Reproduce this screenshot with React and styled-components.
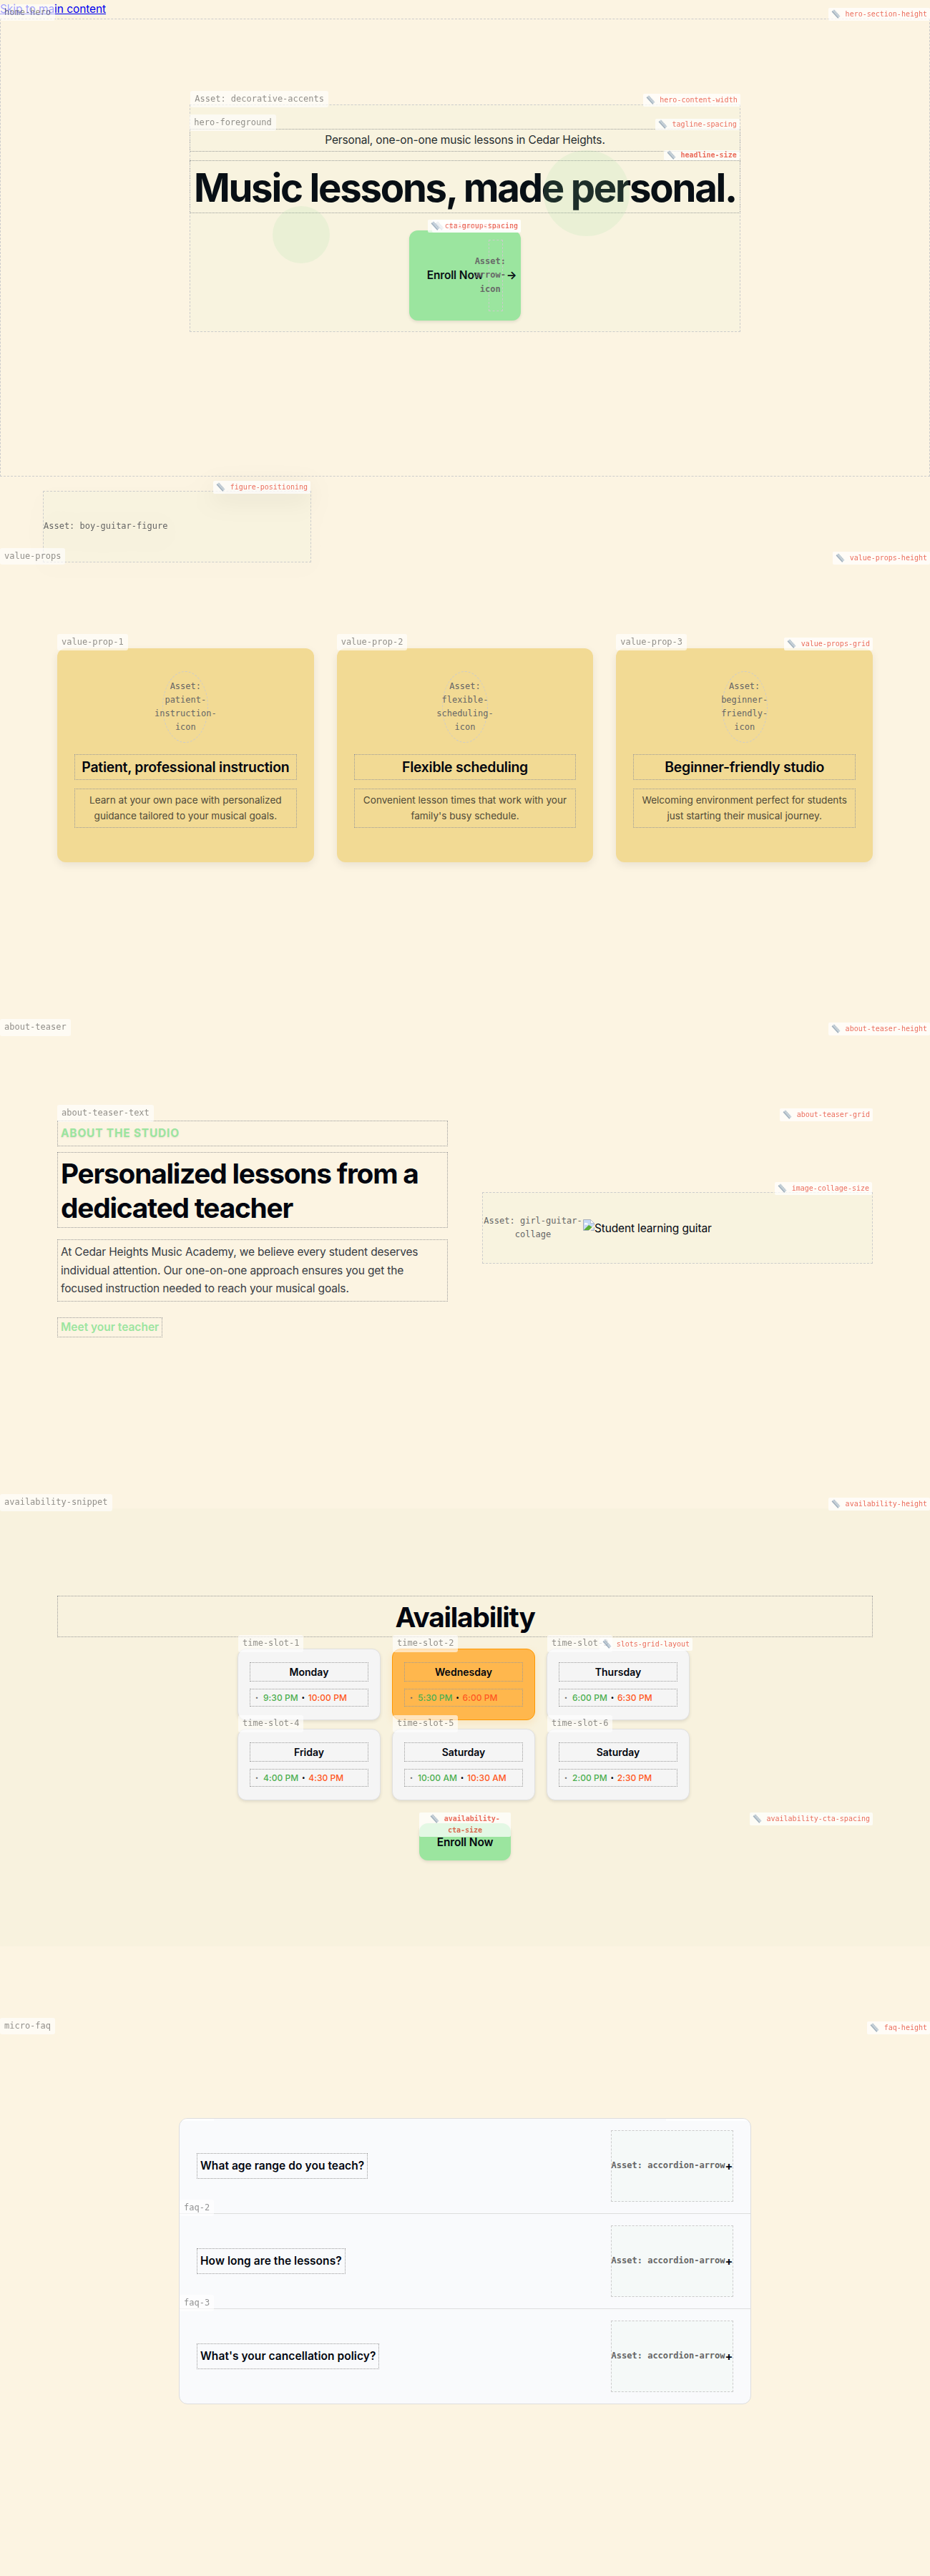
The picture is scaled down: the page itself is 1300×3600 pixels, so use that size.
import React from "react";
import styled, { createGlobalStyle, css } from "styled-components";

const sans = `Inter, "Liberation Sans", sans-serif`;
const mono = `"DejaVu Sans Mono", "Liberation Mono", monospace`;

const Global = createGlobalStyle`
  *, *::before, *::after { box-sizing: border-box; }
  body {
    margin: 0;
    background: #fcf4e2;
    color: #02060f;
    font-family: ${sans};
    font-size: 15.5px;
    line-height: 25.6px;
    letter-spacing: -0.15px;
  }
  h1, h2, h3, p { margin: 0; }
`;

const Page = styled.div`
  display: flow-root;
  height: 3600px;
  overflow: hidden;
`;

const SkipBar = styled.div`
  height: 25.6px;
`;

const SkipLink = styled.a`
  color: #0000ee;
  letter-spacing: -0.08px;
`;

const Label = styled.span`
  position: absolute;
  top: -20px;
  left: 0;
  z-index: 3;
  height: 23.2px;
  padding: 2px 6px;
  border-radius: 3px;
  background: rgba(255, 255, 255, 0.9);
  color: #666;
  opacity: 0.7;
  font: 400 12px/19.2px ${mono};
  letter-spacing: 0;
  white-space: nowrap;
`;

const NoteBox = styled.span`
  position: absolute;
  top: -15px;
  right: 0;
  z-index: 4;
  padding: 1px 4px;
  border-radius: 2px;
  background: rgba(255, 255, 255, 0.9);
  color: #e74c3c;
  opacity: 0.8;
  font-family: ${mono};
  font-size: 10px;
  font-weight: ${(p) => (p.$bold ? 700 : 400)};
  line-height: ${(p) => p.$line || 1.6};
  letter-spacing: 0;
  text-align: center;
  white-space: ${(p) => (p.$wrap ? "normal" : "nowrap")};
`;

const RulerSvg = styled.svg`
  width: 13px;
  height: 13px;
  margin: -2px 0.5px -2px 0;
  vertical-align: -1px;
`;

const Ruler = () => (
  <RulerSvg viewBox="0 0 13 13">
    <path d="M.6 3.200 4 .3 12.600 9.700 9.200 12.700Z" fill="#bccbd9" />
    <path d="M.6 3.200 1.700 2.300 10.300 11.700 9.200 12.700Z" fill="#8da1b5" />
    <path d="M5.200 1.700 3.900 2.800M6.900 3.500 5.600 4.600M8.600 5.400 7.300 6.500M10.300 7.200 9 8.300" stroke="#8496a8" strokeWidth=".6" />
  </RulerSvg>
);

const Note = ({ children, ...rest }) => (
  <NoteBox {...rest}>
    <Ruler /> {children}
  </NoteBox>
);

const dotted = css`
  border: 1px dotted #999;
  padding: 4px;
`;

const Asset = styled.div`
  position: relative;
  display: flex;
  align-items: center;
  justify-content: ${(p) => (p.$start ? "flex-start" : "center")};
  flex: none;
  width: ${(p) => p.$w || "auto"};
  height: 100px;
  border: 1px dashed #ccc;
  border-radius: ${(p) => (p.$round ? "50%" : "0")};
  background: ${(p) => (p.$plain ? "transparent" : "rgba(155, 229, 160, 0.045)")};
`;

const AssetText = styled.span`
  flex: none;
  width: ${(p) => p.$w || "auto"};
  color: #666;
  font-family: ${mono};
  font-size: 12px;
  line-height: 19.2px;
  letter-spacing: 0;
  text-align: center;
  white-space: normal;
`;

/* Hero */

const Hero = styled.section`
  position: relative;
  height: 640px;
  padding-top: 120px;
  outline: 1px dashed #ccc;
  outline-offset: -1px;
`;

const HeroContent = styled.div`
  position: relative;
  width: 769.4px;
  height: 318.4px;
  margin: 0 auto;
  padding-top: 34px;
`;

const Accents = styled.div`
  position: absolute;
  inset: 0;
  border: 1px dashed #ccc;
  background: rgba(155, 229, 160, 0.045);
`;

const Circle = styled.i`
  position: absolute;
  width: 80px;
  height: 80px;
  border-radius: 50%;
  background: rgba(155, 229, 160, 0.15);
`;

const SmallCircle = styled(Circle)`
  left: 15%;
  bottom: 30%;
`;

const LargeCircle = styled(Circle)`
  top: 20%;
  right: 20%;
  width: 120px;
  height: 120px;
`;

const Foreground = styled.div`
  position: relative;
  display: flex;
  flex-direction: column;
  text-align: center;
`;

const Tagline = styled.p`
  ${dotted}
  position: relative;
  color: #1d252b;
  line-height: 22.4px;
`;

const Headline = styled.h1`
  ${dotted}
  position: relative;
  margin-top: 12px;
  padding: 5px 4px 3px;
  font-size: 54.5px;
  font-weight: 700;
  line-height: 64px;
  letter-spacing: -2.24px;
  white-space: nowrap;
`;

const CtaGroup = styled.div`
  position: relative;
  align-self: center;
  margin-top: 24px;
`;

const Button = styled.div`
  position: relative;
  display: flex;
  align-items: center;
  justify-content: center;
  gap: 8px;
  width: ${(p) => p.$w}px;
  height: ${(p) => p.$h}px;
  padding: 0 24px;
  border-radius: 12px;
  background: #9be59f;
  box-shadow: 0 2px 4px rgba(0, 0, 0, 0.1);
  font-weight: 600;
  white-space: nowrap;
`;

const Arrow = styled.span`
  flex: none;
  width: 16px;
  font-weight: 700;
  text-align: center;
`;

/* Figure */

const Figure = styled.div`
  width: 375px;
  margin: 20.4px 0 0 60px;
  filter: drop-shadow(0 8px 16px rgba(0, 0, 0, 0.1));
`;

/* Shared section */

const Section = styled.section`
  position: relative;
  padding: 120px 80px;
  height: ${(p) => p.$h}px;
  margin-top: ${(p) => p.$gap || 0}px;
  background: ${(p) => (p.$tint ? "#f8f2de" : "transparent")};
`;

const Cards = styled.div`
  position: relative;
  display: grid;
  grid-template-columns: repeat(3, minmax(0, 1fr));
  gap: 32px;
`;

const Card = styled.article`
  position: relative;
  display: flex;
  flex-direction: column;
  align-items: center;
  height: 298.8px;
  padding: 32px 24px;
  border-radius: 12px;
  background: #f2da94;
  box-shadow: 0 4px 12px rgba(0, 0, 0, 0.08);
  text-align: center;
`;

const CardTitle = styled.h3`
  ${dotted}
  width: 100%;
  margin: 16px 0 12px;
  font-size: 19.4px;
  font-weight: 600;
  line-height: 26px;
  letter-spacing: -0.24px;
  white-space: nowrap;
`;

const CardText = styled.p`
  ${dotted}
  width: 100%;
  color: #504a38;
  font-size: 13.6px;
  line-height: 22.4px;
  letter-spacing: 0;
`;

/* About */

const AboutGrid = styled.div`
  position: relative;
  display: grid;
  grid-template-columns: repeat(2, minmax(0, 1fr));
  align-items: center;
  gap: 48px;
  height: 304px;
`;

const AboutText = styled.div`
  position: relative;
  height: 304px;
  padding-top: 2px;
`;

const Eyebrow = styled.p`
  ${dotted}
  color: #9be59f;
  font-weight: 700;
  letter-spacing: 0.05em;
  text-shadow: 0 1px 2px rgba(0, 0, 0, 0.1);
`;

const Title = styled.h2`
  ${dotted}
  margin-top: ${(p) => p.$top}px;
  padding: 5px 4px 3px;
  font-size: 38.8px;
  font-weight: 700;
  line-height: 48px;
  letter-spacing: -1.21px;
  text-align: ${(p) => p.$align || "left"};
`;

const AboutBody = styled.p`
  ${dotted}
  margin-top: 16px;
  color: #373b43;
`;

const TeacherLink = styled.a`
  ${dotted}
  display: inline-block;
  margin-top: 22px;
  color: #9be59f;
  font-weight: 600;
  line-height: 18px;
  letter-spacing: 0;
`;

const Broken = styled.svg`
  flex: none;
  width: 16px;
  height: 16px;
  margin-top: -8px;
`;

const BrokenImage = () => (
  <Broken viewBox="0 0 16 16">
    <path d="M.5.5h10l5 5v10H.5z" fill="#c6d9f7" stroke="#a9b0ba" />
    <path d="M2 7c0-2 2-3 3-1.500 2-.5 2.500 1.500 1.500 2H2z" fill="#fff" />
    <path d="M1 15 8 8l5 3-3 4z" fill="#5bae35" />
    <path d="M10.500.5v5h5z" fill="#fff" stroke="#a9b0ba" strokeWidth=".7" />
    <path d="M7.500 16 16 7.500v3L10.500 16z" fill="#f8f2de" />
  </Broken>
);

/* Availability */

const Slots = styled.div`
  position: relative;
  display: grid;
  grid-template-columns: repeat(3, 200px);
  gap: 12px 16px;
  width: 636px;
  margin: 16px auto 0;
`;

const Slot = styled.div`
  position: relative;
  display: flex;
  flex-direction: column;
  gap: 10px;
  height: 100px;
  padding: 18px 16px;
  border: 1px solid ${(p) => (p.$hot ? "#ff9800" : "#e0e0e0")};
  border-radius: 12px;
  background: ${(p) => (p.$hot ? "#ffb74d" : "#f5f5f5")};
  box-shadow: ${(p) => (p.$hot ? "0 4px 12px rgba(255, 152, 0, 0.15)" : "0 2px 4px rgba(0, 0, 0, 0.1)")};
  letter-spacing: 0;
`;

const Day = styled.h3`
  ${dotted}
  font-size: 14px;
  font-weight: 600;
  line-height: 17px;
  text-align: center;
`;

const Times = styled.div`
  ${dotted}
  display: flex;
  align-items: center;
  gap: 3px;
  font-size: 12px;
  font-weight: 500;
  line-height: 15px;
  letter-spacing: 0.06px;
  white-space: nowrap;
`;

const Lead = styled.span`
  width: 11px;
  padding-left: 3px;
  color: #666;
  font-size: 7.5px;
`;

const Start = styled.span`
  color: #4caf50;
`;

const End = styled.span`
  color: #ff5722;
`;

const Dot = styled.span`
  width: 8px;
  font-size: 8.5px;
  text-align: center;
`;

const CtaRow = styled.div`
  position: relative;
  display: flex;
  justify-content: center;
  margin-top: 32px;
`;

/* FAQ */

const FaqList = styled.div`
  width: 800px;
  height: 400px;
  margin: 0 auto;
  overflow: hidden;
  border: 1px solid #ddd;
  border-radius: 12px;
  background: #f9fafc;
`;

const FaqItem = styled.div`
  position: relative;
  display: flex;
  align-items: center;
  justify-content: space-between;
  height: 133px;
  padding: 0 24px;
  border-bottom: 1px solid #ddd;
  font-weight: 600;
  letter-spacing: 0.06px;

  &:last-child {
    height: 132px;
    border-bottom: 0;
  }
`;

const Question = styled.div`
  ${dotted}
`;

const Plus = styled.span`
  padding-top: 2px;
  font-size: 16px;
  font-weight: 700;
  letter-spacing: 0;
`;

const Strip = styled.i`
  position: absolute;
  top: 0;
  ${(p) => p.$side}: 0;
  width: ${(p) => p.$w}px;
  height: 3px;
  background: rgba(255, 255, 255, 0.8);
`;

const cards = [
  ["Asset: patient-instruction-icon", "Patient, professional instruction", "Learn at your own pace with personalized guidance tailored to your musical goals."],
  ["Asset: flexible-scheduling-icon", "Flexible scheduling", "Convenient lesson times that work with your family's busy schedule."],
  ["Asset: beginner-friendly-icon", "Beginner-friendly studio", "Welcoming environment perfect for students just starting their musical journey."],
];

const slots = [
  ["Monday", "9:30 PM", "10:00 PM"],
  ["Wednesday", "5:30 PM", "6:00 PM"],
  ["Thursday", "6:00 PM", "6:30 PM"],
  ["Friday", "4:00 PM", "4:30 PM"],
  ["Saturday", "10:00 AM", "10:30 AM"],
  ["Saturday", "2:00 PM", "2:30 PM"],
];

const questions = [
  "What age range do you teach?",
  "How long are the lessons?",
  "What's your cancellation policy?",
];

export default function App() {
  return (
    <Page>
      <Global />
      <SkipBar>
        <SkipLink href="#main">Skip to main content</SkipLink>
      </SkipBar>

      <Hero id="main">
        <Label>home-hero</Label>
        <Note>hero-section-height</Note>
        <HeroContent>
          <Foreground>
            <Label>hero-foreground</Label>
            <Tagline>
              Personal, one-on-one music lessons in Cedar Heights.
              <Note $line={1.4}>tagline-spacing</Note>
            </Tagline>
            <Headline>
              Music lessons, made personal.
              <Note $bold $line={1.15}>headline-size</Note>
            </Headline>
            <CtaGroup>
              <Button $w={156} $h={126}>
                Enroll Now
                <Asset $w="20px" $plain>
                  <AssetText $w="43.400px">Asset: arrow-icon</AssetText>
                  <Arrow>→</Arrow>
                </Asset>
                <Note $bold>primary-cta-size</Note>
              </Button>
              <Note>cta-group-spacing</Note>
            </CtaGroup>
          </Foreground>
          <Accents>
            <Label>Asset: decorative-accents</Label>
            <SmallCircle />
            <LargeCircle />
          </Accents>
          <Note>hero-content-width</Note>
        </HeroContent>
      </Hero>

      <Figure>
        <Asset $start>
          <AssetText>Asset: boy-guitar-figure</AssetText>
          <Note>figure-positioning</Note>
        </Asset>
      </Figure>

      <Section $h={658.4}>
        <Label>value-props</Label>
        <Note>value-props-height</Note>
        <Cards>
          {cards.map(([asset, title, text], i) => (
            <Card key={title}>
              <Label>value-prop-{i + 1}</Label>
              <Asset $w="64px" $round $plain>
                <AssetText $w="87px">{asset}</AssetText>
              </Asset>
              <CardTitle>{title}</CardTitle>
              <CardText>{text}</CardText>
            </Card>
          ))}
          <Note>value-props-grid</Note>
        </Cards>
      </Section>

      <Section $h={664}>
        <Label>about-teaser</Label>
        <Note>about-teaser-height</Note>
        <AboutGrid>
          <AboutText>
            <Label>about-teaser-text</Label>
            <Eyebrow>ABOUT THE STUDIO</Eyebrow>
            <Title $top={8}>Personalized lessons from a dedicated teacher</Title>
            <AboutBody>
              At Cedar Heights Music Academy, we believe every student deserves
              individual attention. Our one-on-one approach ensures you get the
              focused instruction needed to reach your musical goals.
            </AboutBody>
            <TeacherLink>Meet your teacher</TeacherLink>
          </AboutText>
          <Asset $start>
            <AssetText $w="140px">Asset: girl-guitar-collage</AssetText>
            <BrokenImage />
            Student learning guitar
            <Note>image-collage-size</Note>
          </Asset>
          <Note>about-teaser-grid</Note>
        </AboutGrid>
      </Section>

      <Section $h={611.6} $tint>
        <Label>availability-snippet</Label>
        <Note>availability-height</Note>
        <Title $top={2} $align="center">Availability</Title>
        <Slots>
          {slots.map(([day, start, end], i) => (
            <Slot key={i} $hot={i === 1}>
              <Label>time-slot-{i + 1}</Label>
              <Day>{day}</Day>
              <Times>
                <Lead>•</Lead>
                <Start>{start}</Start>
                <Dot>•</Dot>
                <End>{end}</End>
              </Times>
            </Slot>
          ))}
          <Note>slots-grid-layout</Note>
        </Slots>
        <CtaRow>
          <Button $w={127.6} $h={52}>
            Enroll Now
            <Note $bold $wrap>availability-cta-size</Note>
          </Button>
          <Note>availability-cta-spacing</Note>
        </CtaRow>
      </Section>

      <Section $h={760} $gap={120}>
        <Label>micro-faq</Label>
        <Note>faq-height</Note>
        <FaqList>
          {questions.map((q, i) => (
            <FaqItem key={q}>
              {i === 0 ? (
                <>
                  <Strip $side="left" $w={48} />
                  <Strip $side="right" $w={118} />
                </>
              ) : (
                <Label>faq-{i + 1}</Label>
              )}
              <Question>{q}</Question>
              <Asset $w="171px">
                <AssetText>Asset: accordion-arrow</AssetText>
                <Plus>+</Plus>
              </Asset>
            </FaqItem>
          ))}
        </FaqList>
      </Section>
    </Page>
  );
}
